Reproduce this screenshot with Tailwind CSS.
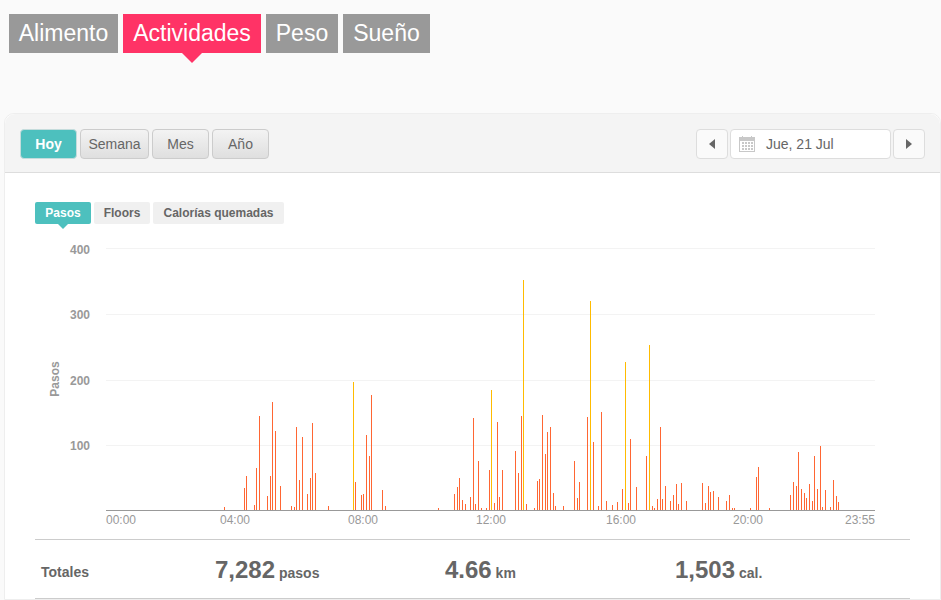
<!DOCTYPE html>
<html lang="es">
<head>
  <meta charset="UTF-8">
  <title>Actividades</title>
  <script src="https://cdn.jsdelivr.net/npm/@tailwindcss/browser@4"></script>
</head>
<body class="bg-[#fafafa] h-[600px] overflow-hidden font-['Liberation_Sans',Arial,sans-serif] text-[#666]">
  <!-- top tabs -->
  <nav class="flex gap-[5px] pl-[9px] pt-[14px] text-[23px] text-white">
    <a class="w-[109px] h-[39px] leading-[38px] text-center bg-[#999]">Alimento</a>
    <a class="relative w-[138px] h-[39px] leading-[38px] text-center bg-[#ff3366]">Actividades
      <span class="absolute left-[59px] top-[39px] w-0 h-0 border-x-[10px] border-x-transparent border-t-[10px] border-t-[#ff3366]"></span>
    </a>
    <a class="w-[72px] h-[39px] leading-[38px] text-center bg-[#999]">Peso</a>
    <a class="w-[87px] h-[39px] leading-[38px] text-center bg-[#999]">Sueño</a>
  </nav>

  <section class="ml-[4px] mt-[60px] bg-white border border-[#eee] rounded-t-[10px]">
    <!-- range buttons and date -->
    <header class="h-[59px] flex justify-between pl-[15px] pr-[15px] pt-[15px] bg-[#f4f4f4] border-b border-b-[#ddd] rounded-t-[10px] text-sm">
      <div class="flex gap-[3px]">
        <button class="w-[57px] h-[30px] rounded-[4px] border border-[#c5dcdc] bg-[#4dc0be] text-white font-bold">Hoy</button>
        <button class="w-[69px] h-[30px] rounded-[4px] border border-[#ccc] bg-gradient-to-b from-[#f3f3f3] to-[#dfdfdf]">Semana</button>
        <button class="w-[57px] h-[30px] rounded-[4px] border border-[#ccc] bg-gradient-to-b from-[#f3f3f3] to-[#dfdfdf]">Mes</button>
        <button class="w-[57px] h-[30px] rounded-[4px] border border-[#ccc] bg-gradient-to-b from-[#f3f3f3] to-[#dfdfdf]">Año</button>
      </div>
      <div class="flex gap-[2px]">
        <button class="w-[32px] h-[30px] rounded-[4px] border border-[#ddd] bg-[#fafafa] flex items-center justify-center">
          <svg width="6" height="10" viewBox="0 0 6 10"><path d="M6 0v10L0 5z" fill="#666"/></svg>
        </button>
        <div class="w-[161px] h-[30px] rounded-[4px] border border-[#ddd] bg-white flex items-center pl-[8px]">
          <svg width="16" height="16" viewBox="0 0 16 16" fill="#c8c8c8">
            <path d="M0 1h3V0h1v1h8V0h1v1h3v15H0zM1 5v10h14V5z"/>
            <path d="M3 6h2v2H3zM6 6h2v2H6zM9 6h2v2H9zM12 6h2v2h-2zM3 9h2v2H3zM6 9h2v2H6zM9 9h2v2H9zM12 9h2v2h-2zM3 12h2v2H3zM6 12h2v2H6zM9 12h2v2H9zM12 12h2v2h-2z"/>
          </svg>
          <span class="ml-[11px]">Jue, 21 Jul</span>
        </div>
        <button class="w-[32px] h-[30px] rounded-[4px] border border-[#ddd] bg-[#fafafa] flex items-center justify-center">
          <svg width="6" height="10" viewBox="0 0 6 10"><path d="M0 0v10l6-5z" fill="#666"/></svg>
        </button>
      </div>
    </header>

    <div class="pl-[30px] pr-[30px] pt-[29px]">
      <!-- metric tabs -->
      <div class="flex gap-[3px] text-xs font-bold">
        <a class="relative w-[56px] h-[22px] leading-[22px] text-center rounded-[2px] bg-[#4dc0be] text-white">Pasos
          <span class="absolute left-[23px] top-[22px] w-0 h-0 border-x-[5px] border-x-transparent border-t-[5px] border-t-[#4dc0be]"></span>
        </a>
        <a class="w-[56px] h-[22px] leading-[22px] text-center rounded-[2px] bg-[#f0f0f0]">Floors</a>
        <a class="w-[131px] h-[22px] leading-[22px] text-center rounded-[2px] bg-[#f0f0f0]">Calorías quemadas</a>
      </div>

      <!-- chart, viewBox uses page coordinates -->
      <svg id="chart" class="block mt-[11px]" width="875" height="295" viewBox="35 235 875 295">
        <g fill="#f3f3f3" shape-rendering="crispEdges">
          <rect x="106" y="248" width="769" height="1"/>
          <rect x="106" y="314" width="769" height="1"/>
          <rect x="106" y="380" width="769" height="1"/>
          <rect x="106" y="445" width="769" height="1"/>
        </g>
        <g fill="#999" font-size="12" font-weight="700" text-anchor="end">
          <text x="90" y="254">400</text>
          <text x="90" y="319">300</text>
          <text x="90" y="385">200</text>
          <text x="90" y="450">100</text>
          <text transform="translate(59 379) rotate(-90)" text-anchor="middle">Pasos</text>
        </g>
        <g id="bars" shape-rendering="crispEdges"></g>
        <rect x="106" y="510" width="769" height="1" fill="#999" shape-rendering="crispEdges"/>
        <g fill="#999" font-size="12">
          <text x="106" y="524">00:00</text>
          <text x="220" y="524">04:00</text>
          <text x="348" y="524">08:00</text>
          <text x="476" y="524">12:00</text>
          <text x="606" y="524">16:00</text>
          <text x="733" y="524">20:00</text>
          <text x="875" y="524" text-anchor="end">23:55</text>
        </g>
      </svg>

      <!-- totals -->
      <div class="mt-[9px] h-[60px] border-y border-[#ccc] grid grid-cols-[180px_230px_230px_1fr] items-center">
        <div class="pl-[6px] text-sm font-bold pt-[6px]">Totales</div>
        <div class="font-bold text-sm pt-px"><span class="text-2xl">7,282</span> pasos</div>
        <div class="font-bold text-sm pt-px"><span class="text-2xl">4.66</span> km</div>
        <div class="font-bold text-sm pt-px"><span class="text-2xl">1,503</span> cal.</div>
      </div>
    </div>
  </section>

  <script>
    // [x, height] in page pixels, read per minute slot
    const orange = [[224,3],[244,22],[246,34],[254,5],[256,42],[259,94],[267,14],[270,34],[272,108],[275,79],[280,24],[291,4],[294,3],[296,83],[299,30],[302,73],[307,16],[310,32],[312,87],[315,37],[328,4],[355,28],[361,15],[363,16],[366,75],[369,54],[371,115],[382,20],[385,4],[438,2],[454,16],[457,23],[459,32],[462,10],[465,6],[470,13],[473,92],[475,6],[478,49],[481,2],[486,2],[489,40],[494,7],[497,88],[499,13],[502,40],[515,59],[518,37],[521,94],[526,6],[534,2],[537,29],[539,31],[542,95],[545,56],[547,78],[550,83],[553,17],[555,4],[563,4],[574,49],[577,12],[579,28],[587,93],[593,68],[598,4],[601,98],[606,9],[612,5],[617,8],[622,21],[628,7],[630,71],[636,23],[646,54],[652,4],[654,2],[657,11],[660,83],[662,11],[665,24],[670,9],[673,15],[676,26],[678,6],[681,27],[686,9],[702,27],[705,7],[708,24],[710,18],[713,19],[718,13],[726,9],[729,15],[732,2],[734,2],[750,2],[756,33],[758,43],[769,2],[790,15],[793,28],[796,24],[798,58],[801,21],[804,17],[806,12],[809,26],[812,9],[814,54],[817,21],[820,64],[822,3],[825,20],[830,3],[833,30],[836,14],[838,8]];
    const yellow = [[353,128],[491,120],[523,230],[590,209],[625,148],[649,165]];
    const bars = document.getElementById("bars");
    const draw = (list, color) => list.forEach(([x, h]) => {
      const r = document.createElementNS("http://www.w3.org/2000/svg", "rect");
      r.setAttribute("x", x);
      r.setAttribute("y", 510 - h);
      r.setAttribute("width", 1);
      r.setAttribute("height", h);
      r.setAttribute("fill", color);
      bars.appendChild(r);
    });
    draw(orange, "#ff6633");
    draw(yellow, "#ffbb00");
  </script>
</body>
</html>
